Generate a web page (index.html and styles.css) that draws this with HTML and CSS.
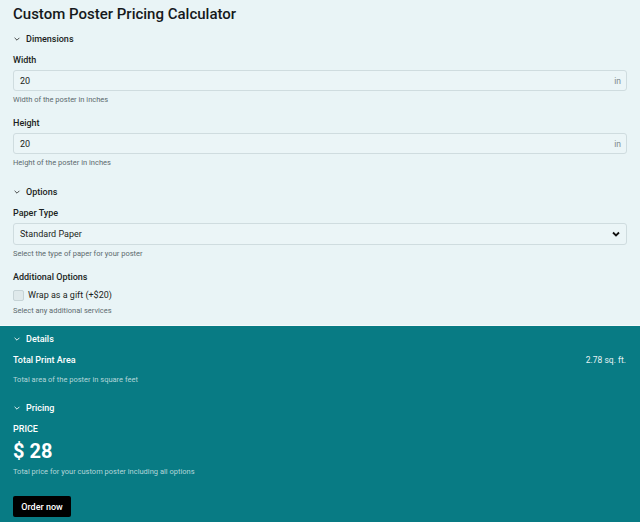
FILE: index.html
```html
<!DOCTYPE html>
<html lang="en">
<head>
<meta charset="utf-8">
<title>Custom Poster Pricing Calculator</title>
<link rel="stylesheet" href="styles.css">
</head>
<body>
<div class="page">
  <section class="inputs">
    <h1 class="title">Custom Poster Pricing Calculator</h1>

    <div class="group">
      <div class="group-head">
        <svg class="chev" viewBox="0 0 10 10"><path d="M2 3.5 L5 6.5 L8 3.5" fill="none" stroke="currentColor" stroke-width="1.1"/></svg>
        <span>Dimensions</span>
      </div>
      <div class="field">
        <label class="label">Width</label>
        <div class="input"><span class="val">20</span><span class="unit">in</span></div>
        <div class="help">Width of the poster in inches</div>
      </div>
      <div class="field">
        <label class="label">Height</label>
        <div class="input"><span class="val">20</span><span class="unit">in</span></div>
        <div class="help">Height of the poster in inches</div>
      </div>
    </div>

    <div class="group">
      <div class="group-head">
        <svg class="chev" viewBox="0 0 10 10"><path d="M2 3.5 L5 6.5 L8 3.5" fill="none" stroke="currentColor" stroke-width="1.1"/></svg>
        <span>Options</span>
      </div>
      <div class="field">
        <label class="label">Paper Type</label>
        <div class="input select"><span class="val">Standard Paper</span>
          <svg class="sel-chev" viewBox="0 0 10 10"><path d="M2 3.5 L5 6.5 L8 3.5" fill="none" stroke="currentColor" stroke-width="1.8"/></svg>
        </div>
        <div class="help">Select the type of paper for your poster</div>
      </div>
      <div class="field">
        <label class="label">Additional Options</label>
        <div class="check"><span class="box"></span><span>Wrap as a gift (+$20)</span></div>
        <div class="help">Select any additional services</div>
      </div>
    </div>
  </section>

  <section class="results">
    <div class="group">
      <div class="group-head">
        <svg class="chev" viewBox="0 0 10 10"><path d="M2 3.5 L5 6.5 L8 3.5" fill="none" stroke="currentColor" stroke-width="1.1"/></svg>
        <span>Details</span>
      </div>
      <div class="row">
        <span class="label">Total Print Area</span>
        <span class="rval">2.78 sq. ft.</span>
      </div>
      <div class="help">Total area of the poster in square feet</div>
    </div>

    <div class="group">
      <div class="group-head">
        <svg class="chev" viewBox="0 0 10 10"><path d="M2 3.5 L5 6.5 L8 3.5" fill="none" stroke="currentColor" stroke-width="1.1"/></svg>
        <span>Pricing</span>
      </div>
      <div class="price-label">PRICE</div>
      <div class="price">$ 28</div>
      <div class="help">Total price for your custom poster including all options</div>
      <button class="order">Order now</button>
    </div>
  </section>
</div>
</body>
</html>
```

FILE: styles.css
```css
* { box-sizing: border-box; }
html, body { margin: 0; padding: 0; }
body {
  font-family: Roboto, "Noto Sans", sans-serif;
  color: #1b1f22;
  background: #087b84;
}
.page { width: 640px; }
.inputs {
  background: #e9f4f6;
  padding: 5px 13px 9px;
  border-bottom: 1px solid #f4fafb;
}
.title {
  margin: 0 0 10px;
  font-size: 15px;
  font-weight: 500;
  line-height: 18px;
  color: #15191c;
}
.group { margin-bottom: 18px; }
.group:last-child { margin-bottom: 0; }
.group-head {
  display: flex;
  align-items: center;
  gap: 5px;
  font-size: 9px;
  font-weight: 500;
  line-height: 12px;
  height: 12px;
  margin-bottom: 9px;
}
.chev { width: 8px; height: 8px; color: #333; }
.field { margin-bottom: 12px; }
.field:last-child { margin-bottom: 0; }
.label {
  display: block;
  font-size: 9px;
  font-weight: 500;
  line-height: 12px;
  margin-bottom: 4px;
}
.input {
  display: flex;
  align-items: center;
  justify-content: space-between;
  height: 21px;
  border: 1px solid #cfdcdf;
  border-radius: 3px;
  background: #ebf5f7;
  padding: 0 6px;
  font-size: 9px;
}
.select { height: 22px; }
.unit { color: #7d8a8e; font-size: 8.5px; margin-right: -1px; }
.sel-chev { width: 10px; height: 10px; color: #111; margin-right: -1px; }
.help {
  margin-top: 4px;
  font-size: 7.5px;
  color: #5c6a6e;
  line-height: 10px;
}
.check {
  display: flex;
  align-items: center;
  gap: 4px;
  font-size: 9px;
  line-height: 12px;
  margin-top: 6px;
}
.box {
  width: 11px;
  height: 11px;
  border: 1px solid #c6d3d6;
  border-radius: 2px;
  background: #dfe9eb;
}
.check + .help { margin-top: 5px; }
.results {
  padding: 7px 13px 5px;
  color: #ffffff;
}
.results .group-head .chev { color: #fff; }
.results .group { margin-bottom: 17px; }
.results .group:last-child { margin-bottom: 0; }
.row {
  display: flex;
  justify-content: space-between;
  align-items: center;
  height: 12px;
}
.row .label { margin: 0; }
.rval { font-size: 8.5px; color: #e6f2f3; margin-right: 1px; }
.results .help { color: #b3d6d9; margin-top: 9px; }
.price-label { font-size: 9px; font-weight: 500; line-height: 12px; margin-bottom: 4px; }
.price { font-size: 20px; font-weight: 700; line-height: 24px; }
.price + .help { margin-top: 4px; }
.order {
  display: block;
  margin-top: 19px;
  background: #000;
  color: #fff;
  border: none;
  border-radius: 2px;
  font-family: inherit;
  font-size: 9px;
  font-weight: 500;
  height: 21px;
  width: 58px;
  padding: 0;
}
```
